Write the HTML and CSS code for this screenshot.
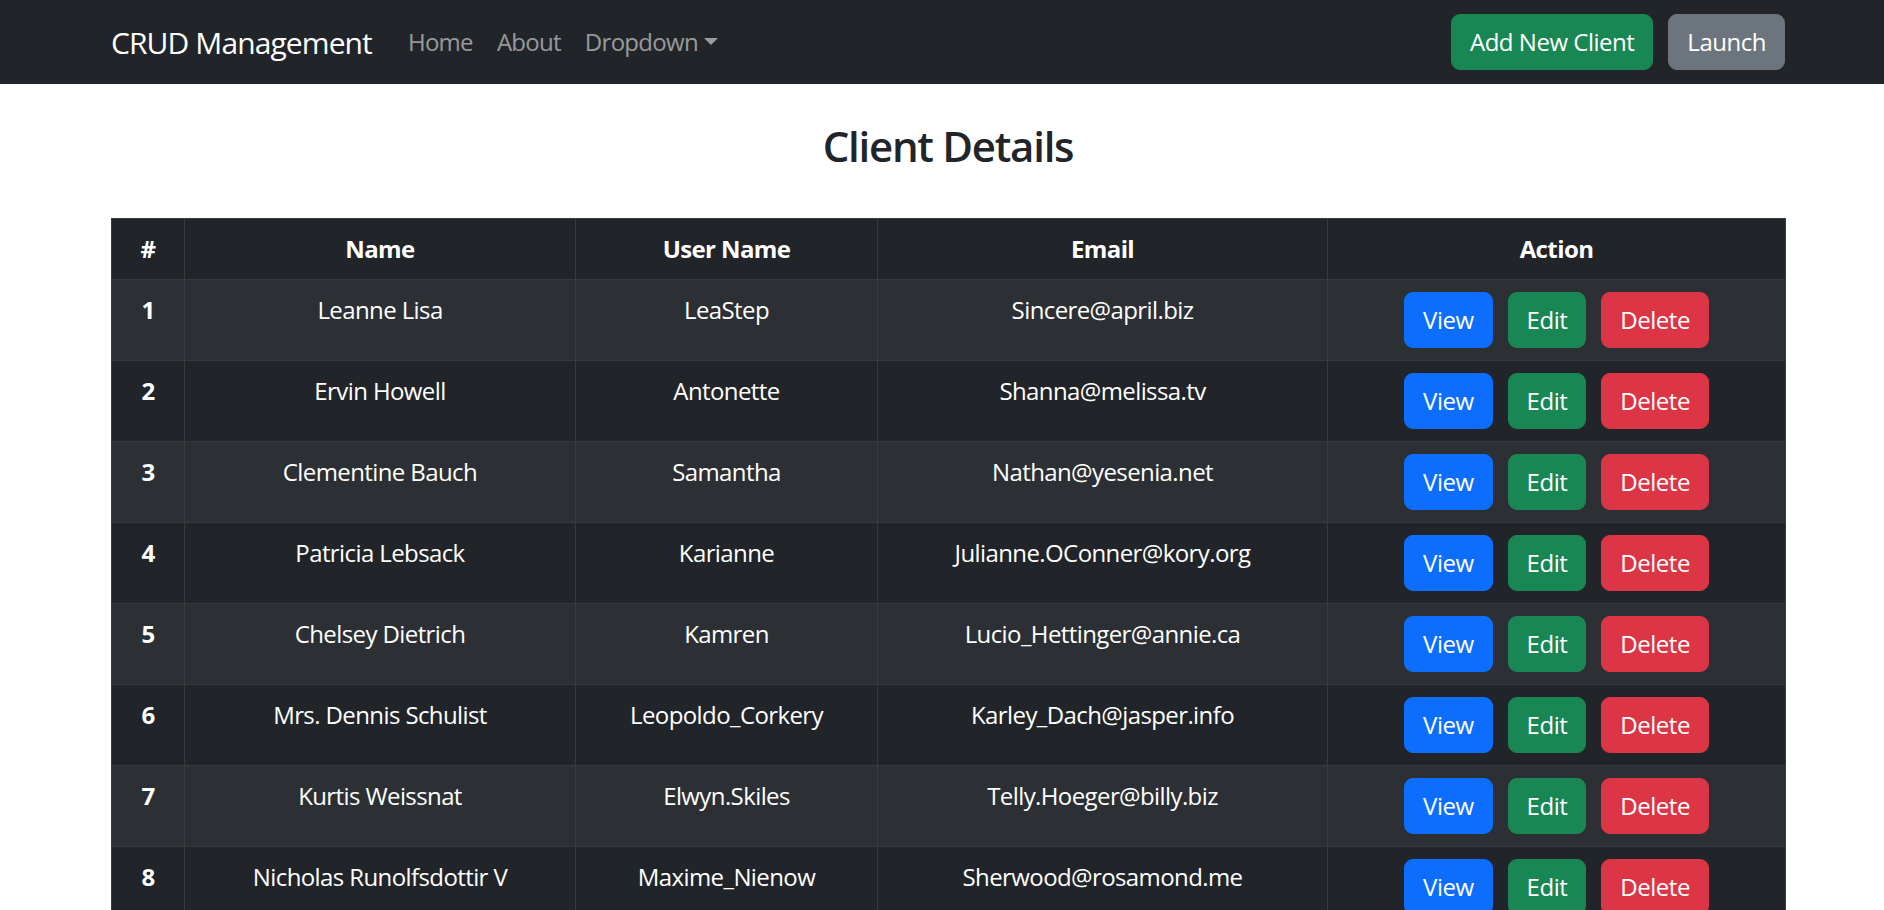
FILE: index.html
```html
<!DOCTYPE html>
<html lang="en">
<head>
<meta charset="utf-8">
<title>CRUD Management</title>
<link rel="stylesheet" href="styles.css">
</head>
<body>
<nav class="navbar">
  <div class="container navbar-inner">
    <div class="nav-left">
      <a class="brand" href="#">CRUD Management</a>
      <ul class="nav-links">
        <li><a href="#">Home</a></li>
        <li><a href="#">About</a></li>
        <li><a href="#" class="dropdown-toggle">Dropdown</a></li>
      </ul>
    </div>
    <div class="nav-right">
      <button class="btn btn-success">Add New Client</button>
      <button class="btn btn-secondary">Launch</button>
    </div>
  </div>
</nav>
<main class="container">
  <h3 class="page-title">Client Details</h3>
  <table class="clients">
    <colgroup>
      <col class="c-num"><col class="c-name"><col class="c-user"><col class="c-email"><col class="c-action">
    </colgroup>
    <thead>
      <tr><th>#</th><th>Name</th><th>User Name</th><th>Email</th><th>Action</th></tr>
    </thead>
    <tbody>
      <tr><th>1</th><td>Leanne Lisa</td><td>LeaStep</td><td>Sincere@april.biz</td><td class="actions"><button class="btn btn-primary">View</button><button class="btn btn-success">Edit</button><button class="btn btn-danger">Delete</button></td></tr>
      <tr><th>2</th><td>Ervin Howell</td><td>Antonette</td><td>Shanna@melissa.tv</td><td class="actions"><button class="btn btn-primary">View</button><button class="btn btn-success">Edit</button><button class="btn btn-danger">Delete</button></td></tr>
      <tr><th>3</th><td>Clementine Bauch</td><td>Samantha</td><td>Nathan@yesenia.net</td><td class="actions"><button class="btn btn-primary">View</button><button class="btn btn-success">Edit</button><button class="btn btn-danger">Delete</button></td></tr>
      <tr><th>4</th><td>Patricia Lebsack</td><td>Karianne</td><td>Julianne.OConner@kory.org</td><td class="actions"><button class="btn btn-primary">View</button><button class="btn btn-success">Edit</button><button class="btn btn-danger">Delete</button></td></tr>
      <tr><th>5</th><td>Chelsey Dietrich</td><td>Kamren</td><td>Lucio_Hettinger@annie.ca</td><td class="actions"><button class="btn btn-primary">View</button><button class="btn btn-success">Edit</button><button class="btn btn-danger">Delete</button></td></tr>
      <tr><th>6</th><td>Mrs. Dennis Schulist</td><td>Leopoldo_Corkery</td><td>Karley_Dach@jasper.info</td><td class="actions"><button class="btn btn-primary">View</button><button class="btn btn-success">Edit</button><button class="btn btn-danger">Delete</button></td></tr>
      <tr><th>7</th><td>Kurtis Weissnat</td><td>Elwyn.Skiles</td><td>Telly.Hoeger@billy.biz</td><td class="actions"><button class="btn btn-primary">View</button><button class="btn btn-success">Edit</button><button class="btn btn-danger">Delete</button></td></tr>
      <tr><th>8</th><td>Nicholas Runolfsdottir V</td><td>Maxime_Nienow</td><td>Sherwood@rosamond.me</td><td class="actions"><button class="btn btn-primary">View</button><button class="btn btn-success">Edit</button><button class="btn btn-danger">Delete</button></td></tr>
    </tbody>
  </table>
</main>
</body>
</html>
```
FILE: styles.css
```css
* { box-sizing: border-box; }

html { overflow: hidden; }

body {
  margin: 0;
  font-family: "Open Sans", "Noto Sans", "Liberation Sans", sans-serif;
  font-size: 24px;
  line-height: 1.5;
  letter-spacing: -0.025em;
  color: #212529;
  background: #fff;
}

.container {
  width: 1674px;
  margin: 0 99px 0 111px;
}

/* Navbar */
.navbar {
  background: #212529;
  padding: 12px 0;
}

.navbar-inner {
  display: flex;
  align-items: center;
  justify-content: space-between;
}

.nav-left {
  display: flex;
  align-items: center;
}

.brand {
  font-size: 30px;
  line-height: 45px;
  padding: 7.5px 0;
  margin-right: 24px;
  letter-spacing: -0.03em;
  color: #fff;
  text-decoration: none;
  white-space: nowrap;
}

.nav-links {
  display: flex;
  list-style: none;
  margin: 0;
  padding: 0;
}

.nav-links a {
  display: block;
  padding: 12px;
  letter-spacing: -0.03em;
  color: rgba(255, 255, 255, 0.55);
  text-decoration: none;
}

.dropdown-toggle::after {
  content: "";
  display: inline-block;
  margin-left: 6px;
  vertical-align: 6px;
  border-top: 7.2px solid;
  border-right: 7.2px solid transparent;
  border-left: 7.2px solid transparent;
  border-bottom: 0;
}

.nav-right {
  display: flex;
  gap: 15px;
}

/* Buttons */
.btn {
  display: inline-block;
  font-family: inherit;
  font-size: 24px;
  line-height: 36px;
  letter-spacing: -0.02em;
  padding: 9px 18px;
  border: 1px solid transparent;
  border-radius: 9px;
  color: #fff;
  cursor: pointer;
  white-space: nowrap;
}

.btn-primary { background: #0d6efd; border-color: #0d6efd; }
.btn-success { background: #198754; border-color: #198754; }
.btn-secondary { background: #6c757d; border-color: #6c757d; }
.btn-danger { background: #dc3545; border-color: #dc3545; }

/* Heading */
.page-title {
  margin: 37px 0 47px;
  font-size: 42px;
  font-weight: 600;
  line-height: 1.2;
  letter-spacing: -0.03em;
  text-align: center;
}

/* Table */
.clients {
  width: 100%;
  border-collapse: collapse;
  table-layout: fixed;
  color: #fff;
  background: #212529;
  text-align: center;
}

.c-num { width: 73px; }
.c-name { width: 391px; }
.c-user { width: 302px; }
.c-email { width: 450px; }
.c-action { width: 458px; }

.clients th,
.clients td {
  border: 1px solid #373b3e;
  padding: 12px;
  vertical-align: top;
}

.clients th { font-weight: 700; }
.clients td { font-weight: 400; }

.clients tbody tr:nth-child(odd) { background: #2c3034; }

.actions {
  white-space: nowrap;
}

.actions .btn + .btn {
  margin-left: 15px;
}
```
